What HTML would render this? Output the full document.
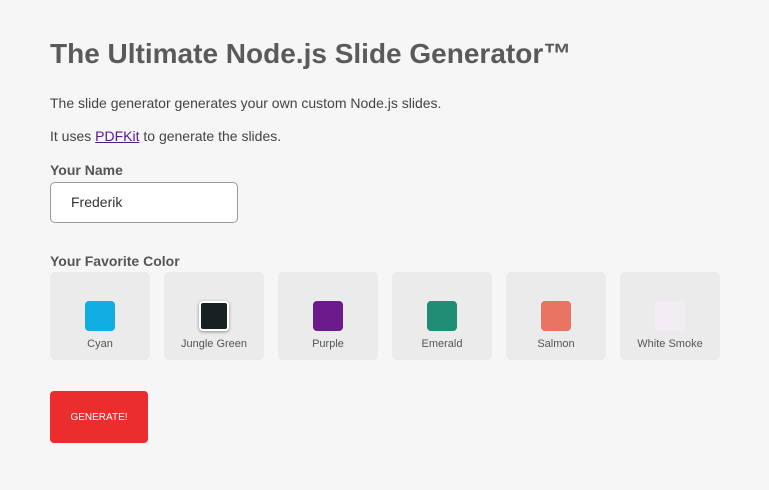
<!DOCTYPE html>
<html><head><style>
body{margin:0;background:#f6f6f6;font-family:"Liberation Sans",sans-serif;color:#555;width:769px;height:490px;overflow:hidden}
.w{position:absolute;left:50px;top:0;width:700px}
h1{position:absolute;top:38px;margin:0;font-size:28px;font-weight:bold;color:#5a5a5a;white-space:nowrap}
.p{position:absolute;font-size:14px;color:#444;white-space:nowrap}
.p a{color:#551a8b}
.l{position:absolute;font-size:14px;font-weight:bold;color:#555}
.in{position:absolute;top:182px;left:0;border:1px solid #999;border-radius:5px;background:#fff;font-size:14px;color:#333;line-height:39px;box-sizing:border-box;padding-left:20px;width:188px;height:41px}
.c{position:absolute;top:272px;width:100px;height:88px;background:#ebebeb;border-radius:5px;text-align:center;font-size:11px;color:#555}
.s{position:absolute;left:35px;top:29px;width:30px;height:30px;border-radius:4px}
.c span{position:absolute;left:0;right:0;top:66px}
.b{position:absolute;top:391px;left:0;width:98px;height:52px;background:#ec2d2d;border-radius:4px;color:#fff;font-size:10px;line-height:54px;text-align:center}
</style></head><body><div class="w">
<h1>The Ultimate Node.js Slide Generator™</h1>
<div class="p" style="top:95px">The slide generator generates your own custom Node.js slides.</div>
<div class="p" style="top:128px">It uses <a href="#">PDFKit</a> to generate the slides.</div>
<div class="l" style="top:162px">Your Name</div>
<div class="in">Frederik</div>
<div class="l" style="top:253px">Your Favorite Color</div>
<div class="c" style="left:0"><div class="s" style="background:#10ade2"></div><span>Cyan</span></div>
<div class="c" style="left:114px"><div class="s" style="background:#182121;border:2px solid #fff;box-shadow:0 1px 3px rgba(0,0,0,.4);width:26px;height:26px"></div><span>Jungle Green</span></div>
<div class="c" style="left:228px"><div class="s" style="background:#6c1c8a"></div><span>Purple</span></div>
<div class="c" style="left:342px"><div class="s" style="background:#1f8c74"></div><span>Emerald</span></div>
<div class="c" style="left:456px"><div class="s" style="background:#ea7462"></div><span>Salmon</span></div>
<div class="c" style="left:570px"><div class="s" style="background:#f1edf2"></div><span>White Smoke</span></div>
<div class="b">GENERATE!</div>
</div></body></html>
